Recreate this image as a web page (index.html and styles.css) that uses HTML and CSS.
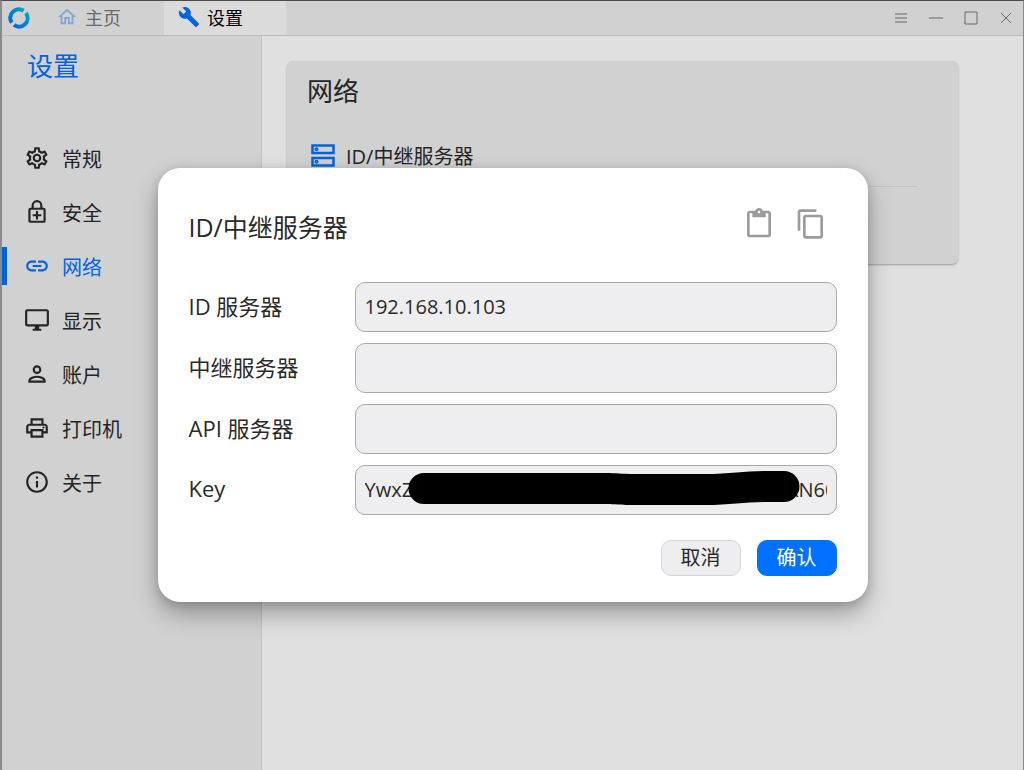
FILE: index.html
```
<!DOCTYPE html>
<html lang="zh-CN">
<head>
  <meta charset="UTF-8">
  <meta name="viewport" content="width=device-width, initial-scale=1.0">
  <title>设置</title>
  <link rel="stylesheet" href="styles.css">
</head>
<body>
  <div class="window">
    <header class="titlebar">
      <svg class="logo" viewBox="0 0 24 24" fill="none" stroke-width="4.4">
        <defs>
          <linearGradient id="ring" x1="4" y1="20" x2="20" y2="4" gradientUnits="userSpaceOnUse">
            <stop offset="0" stop-color="#0071ff"/>
            <stop offset="1" stop-color="#00bde1"/>
          </linearGradient>
        </defs>
        <path stroke="url(#ring)" d="M17 4.100A9.300 9.300 0 0 0 4.100 17"/>
        <path stroke="url(#ring)" d="M19.600 6.600A9.300 9.300 0 0 1 6.600 19.600"/>
      </svg>
      <nav class="tabs">
        <a class="tab" href="#home">
          <svg class="tab-icon home" viewBox="0 0 24 24"><path d="M12 5.7l5 4.5V18h-2v-6H9v6H7v-7.8l5-4.5M12 3L2 12h3v8h6v-6h2v6h6v-8h3z"/></svg>
          主页
        </a>
        <a class="tab selected" href="#settings">
          <svg class="tab-icon" viewBox="0 0 24 24"><path d="M22.7 19l-9.1-9.1c.9-2.3.4-5-1.5-6.9-2-2-5-2.4-7.4-1.3L9 6 6 9 1.6 4.7C.4 7.1.9 10.1 2.9 12.1c1.9 1.9 4.6 2.4 6.9 1.5l9.1 9.1c.4.4 1 .4 1.4 0l2.3-2.3c.5-.4.5-1.1.1-1.4z"/></svg>
          设置
        </a>
      </nav>
      <div class="window-buttons">
        <button aria-label="菜单"><svg viewBox="0 0 14 14"><path d="M1 3h12M1 7h12M1 11h12"/></svg></button>
        <button aria-label="最小化"><svg viewBox="0 0 14 14"><path d="M0 7h14"/></svg></button>
        <button aria-label="最大化"><svg viewBox="0 0 14 14"><path d="M1 1h12v12H1z"/></svg></button>
        <button aria-label="关闭"><svg viewBox="0 0 14 14"><path d="M2 2l10 10M12 2L2 12"/></svg></button>
      </div>
    </header>

    <div class="main">
      <aside class="sidebar">
        <h1>设置</h1>
        <nav class="menu">
          <a href="#general">
            <svg class="icon" viewBox="0 0 24 24"><path d="M12,8A4,4 0 0,1 16,12A4,4 0 0,1 12,16A4,4 0 0,1 8,12A4,4 0 0,1 12,8M12,10A2,2 0 0,0 10,12A2,2 0 0,0 12,14A2,2 0 0,0 14,12A2,2 0 0,0 12,10M10,22C9.75,22 9.54,21.82 9.5,21.58L9.13,18.93C8.5,18.68 7.96,18.34 7.44,17.94L4.95,18.95C4.73,19.03 4.46,18.95 4.34,18.73L2.34,15.27C2.21,15.05 2.27,14.78 2.46,14.63L4.57,12.97L4.5,12L4.57,11L2.46,9.37C2.27,9.22 2.21,8.95 2.34,8.73L4.34,5.27C4.46,5.05 4.73,4.96 4.95,5.05L7.44,6.05C7.96,5.66 8.5,5.32 9.13,5.07L9.5,2.42C9.54,2.18 9.75,2 10,2H14C14.25,2 14.46,2.18 14.5,2.42L14.87,5.07C15.5,5.32 16.04,5.66 16.56,6.05L19.05,5.05C19.27,4.96 19.54,5.05 19.66,5.27L21.66,8.73C21.79,8.95 21.73,9.22 21.54,9.37L19.43,11L19.5,12L19.43,13L21.54,14.63C21.73,14.78 21.79,15.05 21.66,15.27L19.66,18.73C19.54,18.95 19.27,19.04 19.05,18.95L16.56,17.95C16.04,18.34 15.5,18.68 14.87,18.93L14.5,21.58C14.46,21.82 14.25,22 14,22H10M11.25,4L10.88,6.61C9.68,6.86 8.62,7.5 7.85,8.39L5.44,7.35L4.69,8.65L6.8,10.2C6.4,11.37 6.4,12.64 6.8,13.8L4.68,15.36L5.43,16.66L7.86,15.62C8.63,16.5 9.68,17.14 10.87,17.38L11.24,20H12.76L13.13,17.39C14.32,17.14 15.37,16.5 16.14,15.62L18.57,16.66L19.32,15.36L17.2,13.81C17.6,12.64 17.6,11.37 17.2,10.2L19.31,8.65L18.56,7.35L16.15,8.39C15.38,7.5 14.32,6.86 13.12,6.62L12.75,4H11.25Z"/></svg>
            常规
          </a>
          <a href="#safety">
            <svg class="icon line" viewBox="0 0 24 24"><rect x="5" y="9" width="14" height="12" rx="1"/><path d="M8 9V6a4 4 0 0 1 8 0v3M12 11v8M8 15h8"/></svg>
            安全
          </a>
          <a class="active" href="#network">
            <svg class="icon" viewBox="0 0 24 24"><path d="M3.9 12c0-1.71 1.39-3.1 3.1-3.1h4V7H7c-2.76 0-5 2.24-5 5s2.24 5 5 5h4v-1.9H7c-1.71 0-3.1-1.39-3.1-3.1zM8 13h8v-2H8v2zm9-6h-4v1.9h4c1.71 0 3.1 1.39 3.1 3.1s-1.39 3.1-3.1 3.1h-4V17h4c2.76 0 5-2.24 5-5s-2.24-5-5-5z"/></svg>
            网络
          </a>
          <a href="#display">
            <svg class="icon" viewBox="0 0 24 24"><path d="M21 2H3c-1.1 0-2 .9-2 2v12c0 1.1.9 2 2 2h7v2H8v2h8v-2h-2v-2h7c1.1 0 2-.9 2-2V4c0-1.100-.9-2-2-2zm0 14H3V4h18v12z"/></svg>
            显示
          </a>
          <a href="#account">
            <svg class="icon line" viewBox="0 0 24 24"><circle cx="12" cy="8" r="3"/><path d="M5 19v-1c0-2.300 4.500-3.500 7-3.500s7 1.200 7 3.500v1z"/></svg>
            账户
          </a>
          <a href="#printer">
            <svg class="icon" viewBox="0 0 24 24"><path d="M19 8h-1V3H6v5H5c-1.660 0-3 1.340-3 3v6h4v4h12v-4h4v-6c0-1.660-1.340-3-3-3zM8 5h8v3H8V5zm8 14H8v-4h8v4zm2-4v-2H6v2H4v-4c0-.55.45-1 1-1h14c.55 0 1 .45 1 1v4h-2z"/><circle cx="18" cy="11.500" r="1"/></svg>
            打印机
          </a>
          <a href="#about">
            <svg class="icon" viewBox="0 0 24 24"><path d="M11 7h2v2h-2zm0 4h2v6h-2zm1-9C6.480 2 2 6.480 2 12s4.480 10 10 10 10-4.480 10-10S17.520 2 12 2zm0 18c-4.410 0-8-3.590-8-8s3.590-8 8-8 8 3.590 8 8-3.590 8-8 8z"/></svg>
            关于
          </a>
        </nav>
      </aside>

      <main class="content">
        <section class="card">
          <h2>网络</h2>
          <div class="card-row">
            <svg class="server-icon" viewBox="0 0 24 24"><path d="M1.500 1.500h21v7.500h-21zM1.500 14h21v7.500h-21z"/><circle cx="5.500" cy="5.250" r=".8"/><circle cx="5.500" cy="17.750" r=".8"/></svg>
            ID/中继服务器
          </div>
        </section>
      </main>
    </div>

    <div class="overlay">
      <form class="dialog" role="dialog" aria-labelledby="dialogTitle">
        <div class="dialog-header">
          <h3 id="dialogTitle">ID/中继服务器</h3>
          <div class="dialog-tools">
            <button type="button" aria-label="粘贴"><svg viewBox="0 0 24 24"><path d="M19 2h-4.180C14.400.84 13.300 0 12 0c-1.300 0-2.400.84-2.820 2H5c-1.100 0-2 .9-2 2v16c0 1.100.9 2 2 2h14c1.100 0 2-.9 2-2V4c0-1.100-.9-2-2-2zm-7 0c.55 0 1 .45 1 1s-.45 1-1 1-1-.45-1-1 .45-1 1-1zm7 18H5V4h2v3h10V4h2v16z"/></svg></button>
            <button type="button" aria-label="复制"><svg viewBox="0 0 24 24"><path d="M16 1H4c-1.100 0-2 .9-2 2v14h2V3h12V1zm3 4H8c-1.100 0-2 .9-2 2v14c0 1.100.9 2 2 2h11c1.100 0 2-.9 2-2V7c0-1.100-.9-2-2-2zm0 16H8V7h11v14z"/></svg></button>
          </div>
        </div>
        <div class="fields">
          <label for="idServer">ID 服务器</label>
          <input id="idServer" type="text" value="192.168.10.103">
          <label for="relayServer">中继服务器</label>
          <input id="relayServer" type="text">
          <label for="apiServer">API 服务器</label>
          <input id="apiServer" type="text">
          <label for="key">Key</label>
          <div class="key-field">
            <input id="key" type="text" value="YwxZ0000000000000000000000000000000tpXN600">
            <svg class="redaction" viewBox="0 0 482 50" preserveAspectRatio="none"><path d="M69 8H250C262 8 265 9 280 9H350C375 9 390 6 410 6H429A15.500 15.500 0 0 1 429 37H410C390 37 375 40 350 40H280C262 40 258 39 245 39H69A15.500 15.500 0 0 1 69 8z"/></svg>
          </div>
        </div>
        <div class="actions">
          <button type="button">取消</button>
          <button type="button" class="primary">确认</button>
        </div>
      </form>
    </div>
  </div>
</body>
</html>
```
FILE: styles.css
```
* {
  box-sizing: border-box;
}
body {
  margin: 0;
  font-family: "Open Sans", "Noto Sans CJK SC", sans-serif;
  color: #2a2a2a;
}
h1, h2, h3 {
  margin: 0;
  font-weight: normal;
}
a {
  color: inherit;
  text-decoration: none;
}
button {
  font: inherit;
  cursor: pointer;
}
.window {
  position: relative;
  display: flex;
  flex-direction: column;
  min-height: 100vh;
  border: solid #8a8a8c;
  border-width: 1px 1px 0 2px;
  border-top-color: #4c4a4e;
  background: #fff;
}

/* title bar */
.titlebar {
  display: flex;
  align-items: center;
  height: 35px;
  padding-left: 6px;
  background: #eeeef0;
  border-bottom: 1px solid #d4d4d6;
}
.logo {
  width: 22px;
  height: 22px;
}
.tabs {
  display: flex;
  align-self: stretch;
  margin-left: 12px;
}
.tab {
  display: flex;
  align-items: center;
  gap: 7px;
  width: 122px;
  padding: 0 0 2px 14px;
  font-size: 18px;
  color: #777;
}
.tab.selected {
  color: #000;
  background: #fafafb;
}
.tab-icon {
  width: 22px;
  height: 22px;
  fill: #0071ff;
}
.tab-icon.home {
  fill: #92bdf0;
}
.window-buttons {
  display: flex;
  margin-left: auto;
}
.window-buttons button {
  display: flex;
  align-items: center;
  justify-content: center;
  width: 35px;
  height: 34px;
  padding: 0;
  border: none;
  background: none;
}
.window-buttons svg {
  width: 14px;
  height: 14px;
  fill: none;
  stroke: #777;
}

/* sidebar */
.main {
  display: flex;
  flex: 1;
}
.sidebar {
  width: 260px;
  background: #eeeef0;
  border-right: 1px solid #dcdcde;
}
.sidebar h1 {
  padding: 12px 25px;
  font-size: 26px;
  line-height: 36px;
  color: #0071ff;
}
.menu {
  display: flex;
  flex-direction: column;
  gap: 16px;
  margin-top: 43px;
}
.menu a {
  display: flex;
  align-items: center;
  gap: 12px;
  height: 38px;
  padding-left: 17px;
  border-left: 5px solid transparent;
  font-size: 20px;
}
.menu a.active {
  border-left-color: #0071ff;
  color: #0071ff;
}
.icon {
  width: 26px;
  height: 26px;
  fill: currentColor;
}
.icon.line {
  fill: none;
  stroke: currentColor;
  stroke-width: 2;
}

/* content */
.content {
  flex: 1;
  padding: 25px;
}
.card {
  max-width: 671px;
  min-height: 203px;
  padding: 12px 40px 0 20px;
  border-radius: 6px;
  background: #eeeef0;
  box-shadow: 0 1px 2px rgba(0, 0, 0, 0.3);
}
.card h2 {
  font-size: 26px;
  line-height: 36px;
}
.card-row {
  display: flex;
  align-items: center;
  gap: 11px;
  height: 62px;
  margin-top: 16px;
  padding-left: 4px;
  border-bottom: 1px solid #dedee0;
  font-size: 20px;
}
.server-icon {
  width: 24px;
  height: 24px;
  fill: none;
  stroke: #0071ff;
  stroke-width: 2.5;
}

/* dialog */
.overlay {
  position: absolute;
  inset: 0;
  display: flex;
  align-items: center;
  justify-content: center;
  padding-bottom: 2px;
  background: rgba(0, 0, 0, 0.12);
}
.dialog {
  width: 100%;
  max-width: 710px;
  padding: 31px 31px 26px;
  border-radius: 22px;
  background: #fff;
  box-shadow: 0 12px 24px rgba(0, 0, 0, 0.3), 0 2px 10px rgba(0, 0, 0, 0.15);
}
.dialog-header {
  display: flex;
  align-items: center;
  justify-content: space-between;
  height: 50px;
  margin-bottom: 33px;
}
.dialog-header h3 {
  padding-top: 4px;
  font-size: 25px;
}
.dialog-tools {
  display: flex;
  gap: 20px;
  padding-right: 10px;
}
.dialog-tools button {
  display: flex;
  padding: 0;
  border: none;
  background: none;
}
.dialog-tools svg {
  width: 32px;
  height: 32px;
  fill: #9b9b9b;
}
.fields {
  display: grid;
  grid-template-columns: 166px 1fr;
  row-gap: 11px;
  align-items: center;
  font-size: 22px;
}
.fields label {
  padding-bottom: 3px;
}
.fields input {
  display: block;
  width: 100%;
  height: 50px;
  padding: 0 9px;
  border: 1px solid #a8a8a8;
  border-radius: 10px;
  background: #eeeef0;
  font-family: inherit;
  font-size: 20px;
  color: #2a2a2a;
}
.key-field {
  position: relative;
}
.redaction {
  position: absolute;
  inset: 0;
  width: 100%;
  height: 100%;
}
.actions {
  display: flex;
  justify-content: flex-end;
  gap: 16px;
  margin-top: 25px;
}
.actions button {
  width: 80px;
  height: 36px;
  padding: 0;
  border: 1px solid #d6d6d8;
  border-radius: 10px;
  background: #eeeef0;
  font-size: 20px;
  line-height: 34px;
  color: #2a2a2a;
}
.actions .primary {
  border-color: #0071ff;
  background: #0071ff;
  color: #fff;
}
```
